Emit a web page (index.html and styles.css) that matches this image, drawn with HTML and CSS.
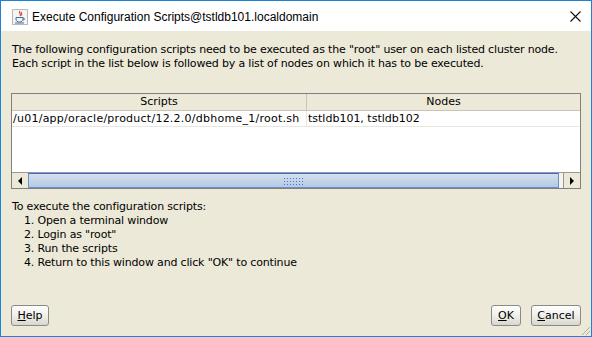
FILE: index.html
```html
<!DOCTYPE html>
<html lang="en">
<head>
    <meta charset="UTF-8">
    <title>Execute Configuration Scripts</title>
    <link rel="stylesheet" href="styles.css">
</head>
<body>
    <div class="window">
        <!-- Title bar -->
        <div class="titlebar">
            <svg class="app-icon" width="16" height="16" viewBox="0 0 16 16">
                <rect x="0.5" y="0.5" width="15" height="15" fill="#f4f4f4" stroke="#b8b8b8"/>
                <path d="M8 2 C6 4 10 5 8 7 M9.5 3 C8.5 4.5 10.5 5 9.5 6.5" stroke="#d9412a" stroke-width="1.1" fill="none"/>
                <path d="M4 8.5 H11 V10 C11 12 9.5 13 7.5 13 C5.5 13 4 12 4 10 Z" fill="none" stroke="#4a6e9a" stroke-width="1"/>
                <path d="M11 9 C13 9 13 11 11 11" stroke="#4a6e9a" stroke-width="1" fill="none"/>
                <path d="M3 14 H12" stroke="#4a6e9a" stroke-width="1"/>
            </svg>
            <span class="title">Execute Configuration Scripts@tstldb101.localdomain</span>
            <span class="close">
                <svg width="11" height="11" viewBox="0 0 11 11">
                    <path d="M0.5 0.5 L10.5 10.5 M10.5 0.5 L0.5 10.5" stroke="#111" stroke-width="1.1"/>
                </svg>
            </span>
        </div>

        <div class="content">
            <p class="intro">
                The following configuration scripts need to be executed as the "root" user on each listed cluster node.<br>
                Each script in the list below is followed by a list of nodes on which it has to be executed.
            </p>

            <div class="table">
                <div class="table-head">
                    <div class="col col-scripts">Scripts</div>
                    <div class="col col-nodes">Nodes</div>
                </div>
                <div class="table-row">
                    <div class="cell col-scripts">/u01/app/oracle/product/12.2.0/dbhome_1/root.sh</div>
                    <div class="cell col-nodes">tstldb101, tstldb102</div>
                </div>
                <div class="table-empty"></div>
                <div class="hscroll">
                    <div class="arrow-btn"><span class="tri tri-left"></span></div>
                    <div class="thumb"><span class="grip"></span></div>
                    <div class="track-rest"></div>
                    <div class="arrow-btn"><span class="tri tri-right"></span></div>
                </div>
            </div>

            <div class="steps">
                <div>To execute the configuration scripts:</div>
                <ol>
                    <li>1. Open a terminal window</li>
                    <li>2. Login as "root"</li>
                    <li>3. Run the scripts</li>
                    <li>4. Return to this window and click "OK" to continue</li>
                </ol>
            </div>

            <div class="buttons">
                <button class="btn btn-help"><u>H</u>elp</button>
                <div class="spacer"></div>
                <button class="btn btn-ok"><u>O</u>K</button>
                <button class="btn btn-cancel"><u>C</u>ancel</button>
            </div>
        </div>
        <div class="grip-corner"></div>
    </div>
</body>
</html>
```

FILE: styles.css
```css
body {
    margin: 0;
    background: #ffffff;
}

.window {
    position: relative;
    width: 592px;
    height: 337px;
    box-sizing: border-box;
    border: 1px solid #1883d7;
    display: flex;
    flex-direction: column;
    background: #ece9d8;
}

/* Title bar */
.titlebar {
    height: 30px;
    background: #ffffff;
    display: flex;
    align-items: center;
    font-family: "Liberation Sans", Arial, sans-serif;
    font-size: 12px;
    color: #000;
}

.app-icon {
    margin-left: 11px;
    margin-top: 1px;
}

.title {
    margin-left: 4px;
    margin-top: 1px;
}

.close {
    margin-left: auto;
    margin-right: 10px;
    display: flex;
}

/* Content */
.content {
    flex: 1;
    display: flex;
    flex-direction: column;
    padding: 0 10px 10px 10px;
    font-family: "DejaVu Sans", sans-serif;
    font-size: 11px;
    letter-spacing: -0.17px;
    color: #000;
}

.intro {
    margin: 12px 0 0 1px;
    line-height: 14px;
}

/* Table */
.table {
    margin-top: 22px;
    height: 96px;
    box-sizing: border-box;
    border: 1px solid #7f7f7f;
    background: #ffffff;
    display: flex;
    flex-direction: column;
    letter-spacing: 0;
}

.table-head {
    display: flex;
    height: 17px;
    background: #ece9d8;
    border-bottom: 1px solid #c8c5b8;
    box-sizing: border-box;
}

.col {
    display: flex;
    align-items: center;
    justify-content: center;
    line-height: 16px;
}

.col-scripts {
    width: 295px;
    box-sizing: border-box;
    border-right: 1px solid #c8c5b8;
}

.col-nodes {
    flex: 1;
}

.table-row {
    display: flex;
    height: 16px;
    border-bottom: 1px solid #e8e6de;
    box-sizing: border-box;
}

.cell {
    padding-left: 1px;
    line-height: 15px;
    white-space: nowrap;
    overflow: hidden;
}

.table-row .col-scripts {
    border-right-color: #e8e6de;
    letter-spacing: 0.25px;
}

.table-empty {
    flex: 1;
}

/* Horizontal scrollbar */
.hscroll {
    height: 16px;
    display: flex;
    border-top: 1px solid #9c9a90;
    box-sizing: border-box;
    background: #f4f3ee;
}

.arrow-btn {
    width: 16px;
    background: #ece9d8;
    display: flex;
    align-items: center;
    justify-content: center;
}

.arrow-btn:last-child {
    border-left: 1px solid #9c9a90;
}

.tri {
    width: 0;
    height: 0;
    border-top: 4px solid transparent;
    border-bottom: 4px solid transparent;
}

.tri-left {
    border-right: 4px solid #000;
}

.tri-right {
    border-left: 4px solid #000;
}

.thumb {
    width: 531px;
    box-sizing: border-box;
    border: 1px solid #6a8fcf;
    border-top-color: #3c6ad0;
    background: linear-gradient(#d4e0ef, #b6c9e1);
    display: flex;
    align-items: center;
    justify-content: center;
}

.grip {
    width: 22px;
    height: 8px;
    background-image: radial-gradient(#4c6fd0 0.8px, transparent 1px);
    background-size: 3px 3px;
}

.track-rest {
    flex: 1;
}

/* Instructions */
.steps {
    margin: 11px 0 0 1px;
    line-height: 14px;
}

.steps ol {
    list-style: none;
    margin: 0;
    padding-left: 12px;
}

/* Buttons */
.buttons {
    margin-top: auto;
    display: flex;
    align-items: center;
}

.spacer {
    flex: 1;
}

.btn {
    height: 21px;
    box-sizing: border-box;
    border: 1px solid #8a8a86;
    border-radius: 3px;
    background: linear-gradient(#ffffff, #ecebe5 60%, #d8d6cc);
    font-family: "DejaVu Sans", sans-serif;
    font-size: 11px;
    color: #000;
    padding: 0;
}

.btn-help {
    width: 38px;
}

.btn-ok {
    width: 30px;
    margin-right: 10px;
}

.btn-cancel {
    width: 50px;
}

.grip-corner {
    position: absolute;
    right: 1px;
    bottom: 1px;
    width: 10px;
    height: 10px;
    background: repeating-linear-gradient(135deg, transparent 0 2px, #b0ada0 2px 3px);
    clip-path: polygon(100% 0, 100% 100%, 0 100%);
}
```
